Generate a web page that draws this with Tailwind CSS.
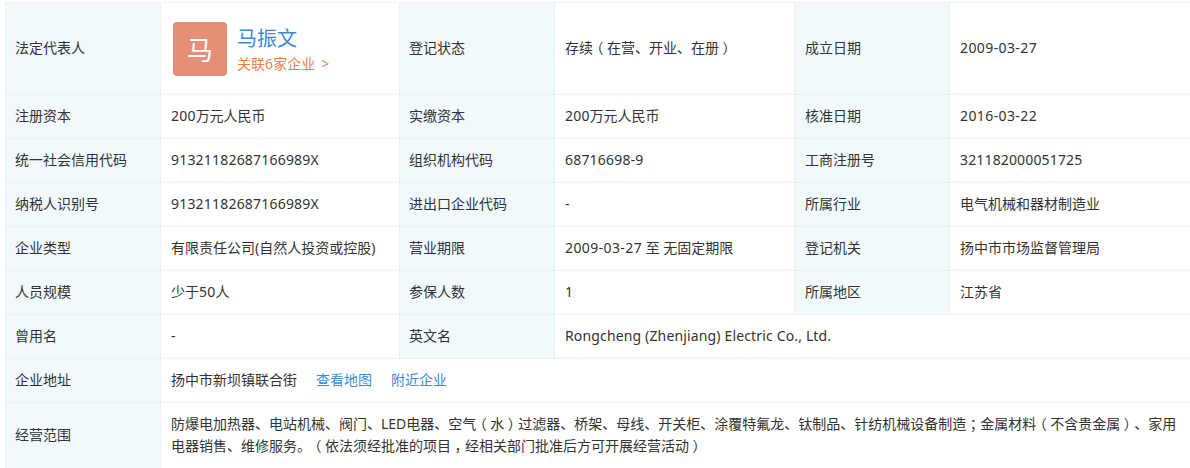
<!DOCTYPE html>
<html lang="zh-CN">
<head>
    <meta charset="UTF-8">
    <title>工商信息</title>
    <script src="https://cdn.jsdelivr.net/npm/@tailwindcss/browser@4"></script>
</head>
<body class="bg-white overflow-hidden">
    <div class="w-[1190px] h-[468px] overflow-hidden pt-[2px] pl-[5px] font-['Noto_Sans','Noto_Sans_CJK_SC',sans-serif] text-[14px] text-[#333] [text-spacing-trim:space-all]">
        <table class="w-[1190px] table-fixed border-collapse [&_td]:border [&_td]:border-[#e9f0f6] [&_td]:px-[10px] [&_td]:pb-[2px] [&_td]:align-middle [&_tr]:h-[44px] [&_td:first-child]:pl-[9px] [&_td:nth-child(3)]:pl-[9px]">
            <colgroup>
                <col class="w-[155px]"><col class="w-[239px]"><col class="w-[155px]"><col class="w-[240px]"><col class="w-[155px]"><col>
            </colgroup>
            <tbody>
                <tr class="h-[92px]!">
                    <td class="bg-[#f2f9fc]">法定代表人</td>
                    <td class="pb-0!">
                        <div class="flex items-center gap-[10px] pl-[2px]">
                            <div class="w-[54px] h-[54px] pt-[3px] rounded-[4px] bg-[#e59076] text-white text-[26px] flex items-center justify-center">马</div>
                            <div class="pt-[2px]">
                                <a class="block text-[20px] leading-[28px] text-[#3b8bd4]">马振文</a>
                                <a class="block mt-[1px] leading-[20px] text-[#ed8149]">关联<span class="tracking-[.2px]">6</span>家企业<span class="ml-[6px]">&gt;</span></a>
                            </div>
                        </div>
                    </td>
                    <td class="bg-[#f2f9fc]">登记状态</td>
                    <td>存续<span class="mx-[3.5px] [font-feature-settings:'halt']">（</span>在营、开业、在册<span class="mx-[3.5px] [font-feature-settings:'halt']">）</span></td>
                    <td class="bg-[#f2f9fc]">成立日期</td>
                    <td class="tracking-[.4px]">2009-03-27</td>
                </tr>
                <tr>
                    <td class="bg-[#f2f9fc]">注册资本</td>
                    <td><span class="tracking-[.2px]">200</span>万元人民币</td>
                    <td class="bg-[#f2f9fc]">实缴资本</td>
                    <td><span class="tracking-[.2px]">200</span>万元人民币</td>
                    <td class="bg-[#f2f9fc]">核准日期</td>
                    <td class="tracking-[.4px]">2016-03-22</td>
                </tr>
                <tr>
                    <td class="bg-[#f2f9fc]">统一社会信用代码</td>
                    <td class="tracking-[.2px]">91321182687166989X</td>
                    <td class="bg-[#f2f9fc]">组织机构代码</td>
                    <td class="tracking-[.2px]">68716698-9</td>
                    <td class="bg-[#f2f9fc]">工商注册号</td>
                    <td class="tracking-[.15px]">321182000051725</td>
                </tr>
                <tr>
                    <td class="bg-[#f2f9fc]">纳税人识别号</td>
                    <td class="tracking-[.2px]">91321182687166989X</td>
                    <td class="bg-[#f2f9fc]">进出口企业代码</td>
                    <td>-</td>
                    <td class="bg-[#f2f9fc]">所属行业</td>
                    <td>电气机械和器材制造业</td>
                </tr>
                <tr>
                    <td class="bg-[#f2f9fc]">企业类型</td>
                    <td>有限责任公司(自然人投资或控股)</td>
                    <td class="bg-[#f2f9fc]">营业期限</td>
                    <td><span class="tracking-[.4px]">2009-03-27</span> 至 无固定期限</td>
                    <td class="bg-[#f2f9fc]">登记机关</td>
                    <td>扬中市市场监督管理局</td>
                </tr>
                <tr>
                    <td class="bg-[#f2f9fc]">人员规模</td>
                    <td>少于<span class="tracking-[.2px]">50</span>人</td>
                    <td class="bg-[#f2f9fc]">参保人数</td>
                    <td>1</td>
                    <td class="bg-[#f2f9fc]">所属地区</td>
                    <td>江苏省</td>
                </tr>
                <tr>
                    <td class="bg-[#f2f9fc]">曾用名</td>
                    <td>-</td>
                    <td class="bg-[#f2f9fc]">英文名</td>
                    <td colspan="3" class="tracking-[.15px]">Rongcheng (Zhenjiang) Electric Co., Ltd.</td>
                </tr>
                <tr>
                    <td class="bg-[#f2f9fc]">企业地址</td>
                    <td colspan="5">扬中市新坝镇联合街<a class="ml-[19px] text-[#3b8bd4]">查看地图</a><a class="ml-[19px] text-[#3b8bd4]">附近企业</a></td>
                </tr>
                <tr class="h-[66px]!">
                    <td class="bg-[#f2f9fc]">经营范围</td>
                    <td colspan="5" class="leading-[22px]">防爆电加热器、电站机械、阀门、LED电器、空气<span class="mx-[3.5px] [font-feature-settings:'halt']">（</span>水<span class="mx-[3.5px] [font-feature-settings:'halt']">）</span>过滤器、桥架、母线、开关柜、涂覆特氟龙、钛制品、针纺机械设备制造<span class="mx-[3.5px] [font-feature-settings:'halt']">；</span>金属材料<span class="mx-[3.5px] [font-feature-settings:'halt']">（</span>不含贵金属<span class="mx-[3.5px] [font-feature-settings:'halt']">）</span>、家用<br>电器销售、维修服务。<span class="mx-[3.5px] [font-feature-settings:'halt']">（</span>依法须经批准的项目<span class="mx-[3.5px] [font-feature-settings:'halt']">，</span>经相关部门批准后方可开展经营活动<span class="mx-[3.5px] [font-feature-settings:'halt']">）</span></td>
                </tr>
            </tbody>
        </table>
    </div>
</body>
</html>
